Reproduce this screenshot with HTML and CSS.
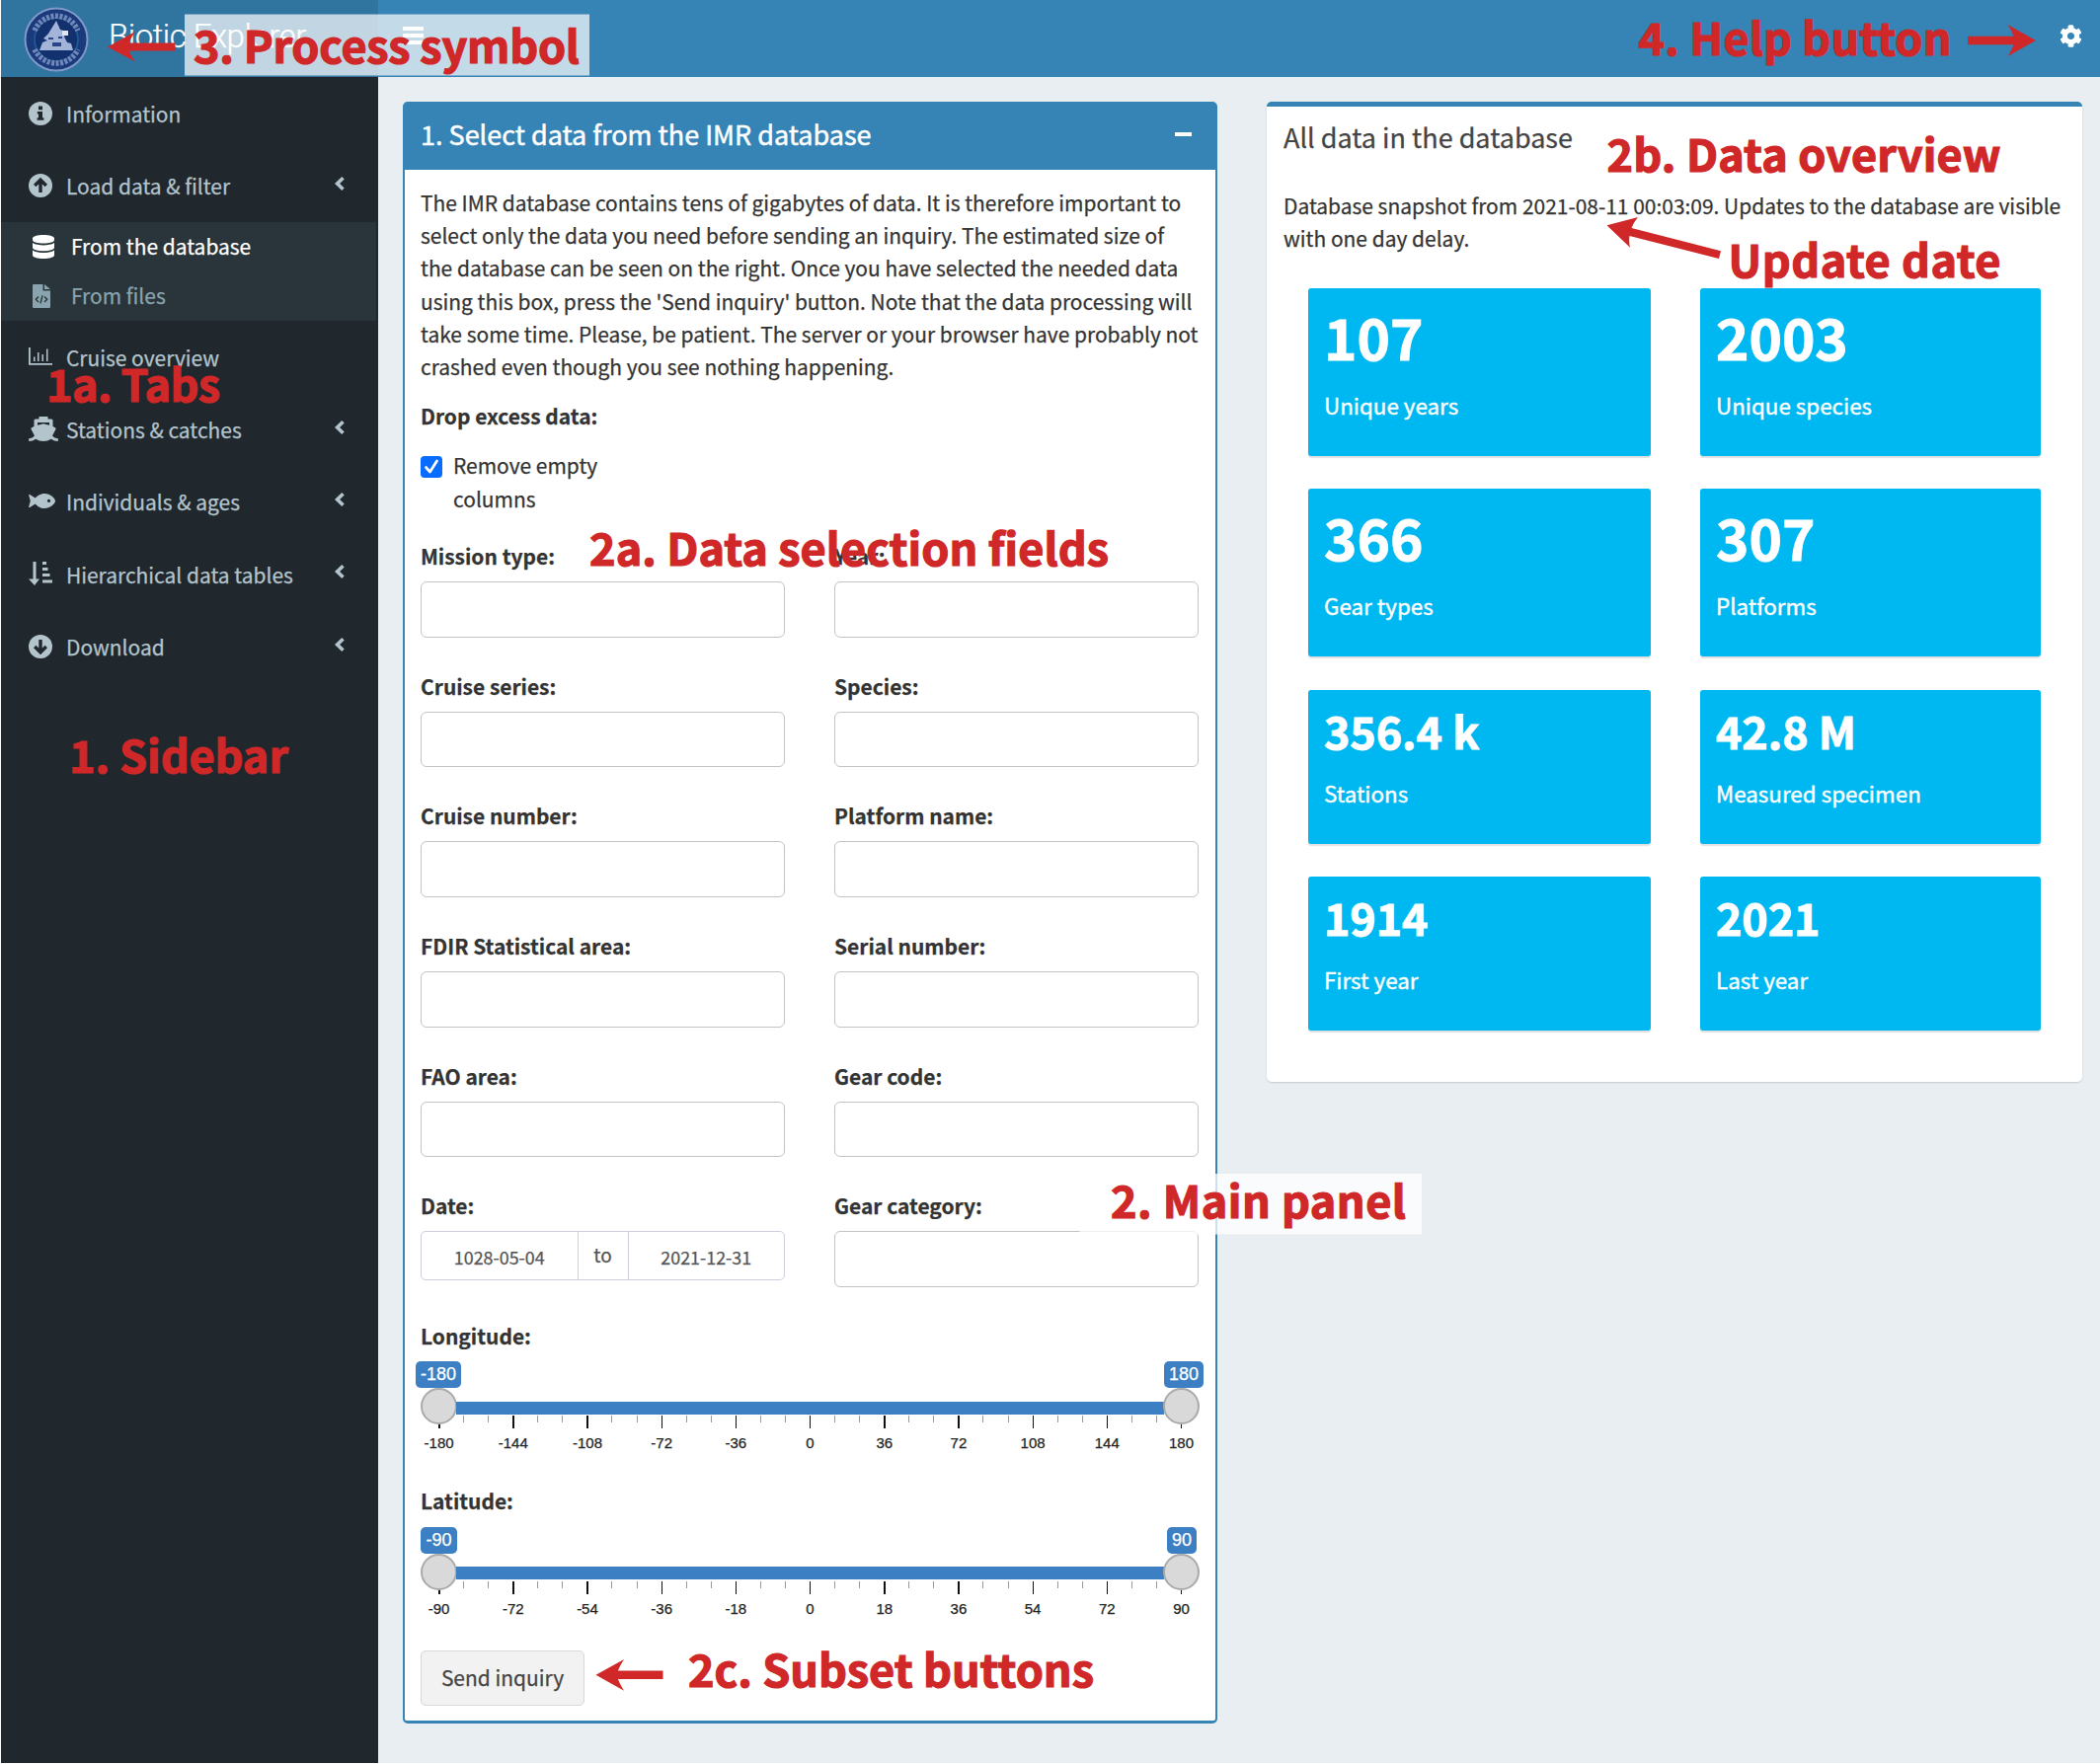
FILE: index.html
```html
<!DOCTYPE html>
<html lang="en">
<head>
<meta charset="utf-8">
<title>Biotic Explorer</title>
<link rel="stylesheet" href="styles.css">
</head>
<body>
<div class="app">
  <header class="topbar">
    <div class="brand">
      <svg class="logo" viewBox="0 0 66 66">
        <circle cx="33" cy="33" r="31.500" fill="#1a3a7c" stroke="#7f99c8" stroke-width="2"/>
        <circle cx="33" cy="33" r="22" fill="#14316f" stroke="#1d5a92" stroke-width="1.800"/>
        <path d="M13.500 25A21 21 0 0 1 52.500 25M13.500 42A21.500 21.500 0 0 0 52.500 42" fill="none" stroke="#7288bb" stroke-width="5" stroke-dasharray="2.600 1.400" transform="translate(33 33) scale(1.120) translate(-33 -33)"/>
        <path d="M33 14L37 23 44 25 41 30 44 36 48 37 50 44H16L19 36 24 34 20 32 25 27z" fill="#a3b4d9"/>
        <path d="M39 24h6v5h-6z" fill="#dfe6f3"/>
        <path d="M29 36h9v4h-9zM25 31h5v2h-5zM35 30h4v2h-4z" fill="#2a4688"/>
      </svg>
      <span class="brand-name">Biotic Explorer</span>
    </div>
    <nav class="navbar">
      <svg class="burger" viewBox="0 0 21 18"><path d="M0 0h21v4H0zM0 7h21v4H0zM0 14h21v4H0z" fill="#fff"/></svg>
      <svg class="gear" viewBox="0 0 512 512"><path fill="#fff" fill-rule="evenodd" d="M487.400 315.700l-42.600-24.600c4.300-23.200 4.300-47 0-70.200l42.600-24.600c4.900-2.800 7.100-8.600 5.500-14-11.100-35.600-30-67.800-54.700-94.600-3.800-4.100-10-5.100-14.800-2.300L380.800 110c-17.900-15.400-38.500-27.300-60.800-35.100V25.800c0-5.600-3.900-10.500-9.400-11.700-36.700-8.200-74.300-7.800-109.200 0-5.500 1.200-9.400 6.100-9.400 11.700V75c-22.200 7.900-42.800 19.800-60.800 35.100L88.700 85.500c-4.900-2.800-11-1.900-14.800 2.300-24.700 26.700-43.600 58.900-54.700 94.600-1.700 5.400.6 11.200 5.500 14L67.300 221c-4.300 23.200-4.300 47 0 70.200l-42.600 24.600c-4.900 2.800-7.100 8.600-5.500 14 11.100 35.600 30 67.800 54.700 94.600 3.800 4.100 10 5.100 14.800 2.300l42.600-24.600c17.900 15.400 38.500 27.300 60.800 35.100v49.200c0 5.600 3.900 10.500 9.400 11.700 36.700 8.200 74.300 7.800 109.200 0 5.500-1.200 9.400-6.100 9.400-11.700v-49.200c22.200-7.900 42.800-19.800 60.800-35.100l42.600 24.600c4.900 2.800 11 1.900 14.800-2.300 24.700-26.700 43.600-58.900 54.700-94.600 1.500-5.500-.7-11.300-5.600-14.100zM256 336c-44.100 0-80-35.900-80-80s35.900-80 80-80 80 35.900 80 80-35.900 80-80 80z"/></svg>
    </nav>
  </header>

  <div class="main">
    <aside class="sidebar">
      <a class="item">
        <svg class="ico" viewBox="0 0 24 24"><circle cx="12" cy="12" r="12"/><path class="cut" d="M10 4.500h4v3.800h-4zM8.800 10h5.200v6.200h1.400v2.500H8.600v-2.500H10v-3.700H8.800z"/></svg>
        <span class="text">Information</span>
      </a>
      <a class="item">
        <svg class="ico" viewBox="0 0 24 24"><circle cx="12" cy="12" r="12"/><path class="cut-line" d="M12 19V6.500M6.200 12L12 6.200 17.800 12"/></svg>
        <span class="text">Load data &amp; filter</span>
        <svg class="chev" viewBox="0 0 10 14"><path d="M8.500 1.300L2.600 7l5.900 5.700"/></svg>
      </a>
      <div class="submenu">
        <a class="sub active">
          <svg class="ico" viewBox="0 0 22 24"><path d="M0 3.500C0 1.500 5 0 11 0s11 1.500 11 3.500v1.800C22 7.200 17 8.600 11 8.600S0 7.200 0 5.300zM0 8c2.500 1.800 7 2.400 11 2.400S19.500 9.800 22 8v4.700c0 2-5 3.500-11 3.500S0 14.700 0 12.700zM0 15.500c2.500 1.800 7 2.500 11 2.500s8.500-.7 11-2.500v5c0 2-5 3.500-11 3.500S0 22.500 0 20.500z"/></svg>
          <span class="text">From the database</span>
        </a>
        <a class="sub">
          <svg class="ico file" viewBox="0 0 18 24"><path d="M0 1.200Q0 0 1.200 0H10.500v6.500H18v16.300q0 1.200-1.200 1.200H1.200Q0 24 0 22.800zM12 0l6 5h-6z"/><path class="cut-thin" d="M6 12.500L3.300 15.300 6 18M12 12.500l2.700 2.800L12 18M10 11.300L8 19.300"/></svg>
          <span class="text">From files</span>
        </a>
      </div>
      <a class="item">
        <svg class="ico chart" viewBox="0 0 24 18"><path d="M0 0h1.800v16H24v1.800H0zM5 9.500h1.500V14H5zM9 5h1.500v9H9zM13.500 7H15v7h-1.500zM18 1.500h1.500V14H18z"/></svg>
        <span class="text">Cruise overview</span>
      </a>
      <a class="item">
        <svg class="ico ship" viewBox="0 0 30 25"><path fill-rule="evenodd" d="M10.500 0h9v2.500H23q1.500 0 1.500 1.500v6l2.500 1.300q1 .6.400 1.600L24 19.500q2 2.500 5.800 2.800V25q-4 0-7-2.300-3.500 2.300-7.800 2.300t-7.800-2.300Q4.200 25 .2 25v-2.700Q4 22 6 19.500l-3.400-6.600q-.6-1 .4-1.600L5.500 10V4Q5.500 2.500 7 2.500h3.500zM9 6v2.800l6-1.600 6 1.600V6z"/></svg>
        <span class="text">Stations &amp; catches</span>
        <svg class="chev" viewBox="0 0 10 14"><path d="M8.500 1.300L2.600 7l5.900 5.700"/></svg>
      </a>
      <a class="item">
        <svg class="ico fish" viewBox="0 0 27 15"><path fill-rule="evenodd" d="M16 0c6 0 11 5 11 7.500S22 15 16 15c-4 0-7.500-2.500-9.300-4.600L1.200 14Q0 14.500.2 13.200L1.800 7.500.2 1.800Q0 .5 1.200 1l5.500 3.600C8.500 2.500 12 0 16 0zM20.500 5.800a1.600 1.600 0 1 0 .01 0z"/></svg>
        <span class="text">Individuals &amp; ages</span>
        <svg class="chev" viewBox="0 0 10 14"><path d="M8.500 1.300L2.600 7l5.900 5.700"/></svg>
      </a>
      <a class="item">
        <svg class="ico sort" viewBox="0 0 24 24"><path d="M4.500 0h3v17.500H11L6 24 0 17.500h4.500zM14 0h4v3h-4zM14 6h5.500v3H14zM14 12h7.500v3H14zM14 18.500h10v3H14z"/></svg>
        <span class="text">Hierarchical data tables</span>
        <svg class="chev" viewBox="0 0 10 14"><path d="M8.500 1.300L2.600 7l5.900 5.700"/></svg>
      </a>
      <a class="item">
        <svg class="ico" viewBox="0 0 24 24"><circle cx="12" cy="12" r="12"/><path class="cut-line" d="M12 5v12.500M6.200 12l5.800 5.800L17.800 12"/></svg>
        <span class="text">Download</span>
        <svg class="chev" viewBox="0 0 10 14"><path d="M8.500 1.300L2.600 7l5.900 5.700"/></svg>
      </a>
    </aside>

    <main class="content">
      <section class="box box-select">
        <header class="box-header">
          <h3 class="title">1. Select data from the IMR database</h3>
          <span class="collapse"></span>
        </header>
        <div class="box-body">
          <p class="para">The IMR database contains tens of gigabytes of data. It is therefore important to<br>select only the data you need before sending an inquiry. The estimated size of<br>the database can be seen on the right. Once you have selected the needed data<br>using this box, press the 'Send inquiry' button. Note that the data processing will<br>take some time. Please, be patient. The server or your browser have probably not<br>crashed even though you see nothing happening.</p>
          <div class="label drop">Drop excess data:</div>
          <div class="check">
            <svg class="tick" viewBox="0 0 22 22"><rect width="22" height="22" rx="4" fill="#0a6cff"/><path d="M5.500 11.500l4 4.500 7-11" fill="none" stroke="#fff" stroke-width="2.700" stroke-linecap="round" stroke-linejoin="round"/></svg>
            <span>Remove empty<br>columns</span>
          </div>
          <div class="fields">
            <div class="field"><div class="label">Mission type:</div><div class="input"></div></div>
            <div class="field"><div class="label">Year:</div><div class="input"></div></div>
            <div class="field"><div class="label">Cruise series:</div><div class="input"></div></div>
            <div class="field"><div class="label">Species:</div><div class="input"></div></div>
            <div class="field"><div class="label">Cruise number:</div><div class="input"></div></div>
            <div class="field"><div class="label">Platform name:</div><div class="input"></div></div>
            <div class="field"><div class="label">FDIR Statistical area:</div><div class="input"></div></div>
            <div class="field"><div class="label">Serial number:</div><div class="input"></div></div>
            <div class="field"><div class="label">FAO area:</div><div class="input"></div></div>
            <div class="field"><div class="label">Gear code:</div><div class="input"></div></div>
            <div class="field"><div class="label">Date:</div><div class="dates"><span class="date">1028-05-04</span><span class="to">to</span><span class="date">2021-12-31</span></div></div>
            <div class="field"><div class="label">Gear category:</div><div class="input"></div></div>
          </div>
          <div class="slider">
            <div class="label">Longitude:</div>
            <div class="badges"><span class="badge">-180</span><span class="badge">180</span></div>
            <div class="track"><i class="knob"></i><i class="bar"></i><i class="knob"></i></div>
            <div class="ticks"></div>
            <div class="scale"><span>-180</span><span>-144</span><span>-108</span><span>-72</span><span>-36</span><span>0</span><span>36</span><span>72</span><span>108</span><span>144</span><span>180</span></div>
          </div>
          <div class="slider">
            <div class="label">Latitude:</div>
            <div class="badges"><span class="badge">-90</span><span class="badge">90</span></div>
            <div class="track"><i class="knob"></i><i class="bar"></i><i class="knob"></i></div>
            <div class="ticks"></div>
            <div class="scale"><span>-90</span><span>-72</span><span>-54</span><span>-36</span><span>-18</span><span>0</span><span>18</span><span>36</span><span>54</span><span>72</span><span>90</span></div>
          </div>
          <button class="send">Send inquiry</button>
        </div>
      </section>

      <section class="box box-overview">
        <h3 class="title">All data in the database</h3>
        <p class="para">Database snapshot from 2021-08-11 00:03:09. Updates to the database are visible<br>with one day delay.</p>
        <div class="cards">
          <div class="card big"><b>107</b><span>Unique years</span></div>
          <div class="card big"><b>2003</b><span>Unique species</span></div>
          <div class="card big"><b>366</b><span>Gear types</span></div>
          <div class="card big"><b>307</b><span>Platforms</span></div>
          <div class="card"><b>356.4 k</b><span>Stations</span></div>
          <div class="card"><b>42.8 M</b><span>Measured specimen</span></div>
          <div class="card"><b>1914</b><span>First year</span></div>
          <div class="card"><b>2021</b><span>Last year</span></div>
        </div>
      </section>
    </main>
  </div>

  <svg class="notes" viewBox="0 0 2127 1787">
    <rect x="187" y="14.500" width="410" height="62" fill="#fff" fill-opacity=".7"/>
    <rect x="1093.500" y="1189" width="346.500" height="61.500" fill="#fff" fill-opacity=".75"/>
    <g class="arrows">
      <path d="M109 47.500L137 32Q132 39 131 43.500H177.500V51.500H131Q132 56 137 62.500z"/>
      <path d="M2062 41L2033.500 25Q2038 32 2039.500 36.700H1993V45.300H2039.500Q2038 50 2033.500 57z"/>
      <path d="M603.500 1696.700L632 1681Q627.500 1688 626 1692.400H671.500V1701H626Q627.500 1705.500 632 1712.700z"/>
      <path d="M1627.500 228.300L1659 220Q1654.500 225.500 1652.500 231L1743 254.300 1741 262 1650.500 239Q1649.500 244 1651 250.700z"/>
    </g>
    <g class="captions">
      <text x="196" y="63.500" textLength="391">3. Process symbol</text>
      <text x="1659.500" y="55.700" textLength="317">4. Help button</text>
      <text x="47" y="407" textLength="176">1a. Tabs</text>
      <text x="70" y="782.700" textLength="222">1. Sidebar</text>
      <text x="597" y="573" textLength="526">2a. Data selection fields</text>
      <text x="1627.500" y="173.700" textLength="399">2b. Data overview</text>
      <text x="1750.500" y="280.700" textLength="276">Update date</text>
      <text x="1125" y="1233.700" textLength="299">2. Main panel</text>
      <text x="697" y="1708.700" textLength="411">2c. Subset buttons</text>
    </g>
  </svg>
</div>
</body>
</html>
```
FILE: styles.css
```css
* { box-sizing: border-box; }
body { margin: 0; background: #fff; }
h3, p { margin: 0; font-weight: 400; }

.app {
  position: relative;
  width: 2127px;
  height: 1787px;
  padding: 0 0 1px 1px;
  display: flex;
  flex-direction: column;
  overflow: hidden;
  font-family: "Noto Sans CJK SC", "Open Sans", sans-serif;
  font-size: 20.960px;
  line-height: 33.33px;
  color: #333;
  -webkit-text-stroke: .25px currentColor;
}

/* top bar */
.topbar { display: flex; height: 78px; flex: none; }
.brand {
  width: 382px;
  background: #3074a0;
  display: flex;
  align-items: center;
  padding: 0 0 0 23px;
}
.logo { width: 66px; height: 66px; margin-top: 2px; }
.brand-name {
  margin-left: 20px;
  margin-top: -5px;
  font-family: Roboto, "Liberation Sans", sans-serif;
  font-weight: 300;
  font-size: 33px;
  letter-spacing: -0.5px;
  color: #fff;
  white-space: nowrap;
}
.navbar {
  flex: 1;
  background: #3683b5;
  display: flex;
  justify-content: space-between;
  padding: 25px 18px 0 25px;
}
.burger { width: 21px; height: 18px; margin-top: 2px; }
.gear { width: 23px; height: 23px; }

/* sidebar */
.main { flex: 1; display: flex; min-height: 0; }
.sidebar { width: 382px; background: #20282e; color: #b4c4cc; }
.item {
  height: 73.33px;
  display: flex;
  align-items: center;
  padding: 0 34px 0 28px;
}
.item .text { width: 272px; margin-top: 2px; white-space: nowrap; }
.ico { flex: none; width: 24px; height: 24px; margin-right: 14px; fill: #b4c4cc; }
.ico.ship { width: 30px; height: 25px; margin-right: 8px; }
.ico.fish { width: 27px; height: 15px; margin-right: 11px; }
.ico.chart { height: 18px; }
.cut { fill: #20282e; }
.cut-line { fill: none; stroke: #20282e; stroke-width: 3.4; }
.cut-thin { fill: none; stroke: #29353a; stroke-width: 1.4; }
.chev { width: 10px; height: 14px; margin-top: -4px; }
.chev path { fill: none; stroke: #b4c4cc; stroke-width: 3.6; }
.submenu {
  width: 380px;
  height: 100px;
  padding-left: 32px;
  background: #29353a;
}
.sub { display: flex; align-items: center; height: 50px; color: #8aa4af; }
.sub .text { margin-top: 1px; }
.sub .ico { width: 22px; margin-right: 17px; fill: #8aa4af; }
.sub .ico.file { width: 18px; margin-right: 21px; }
.sub.active { color: #fff; }
.sub.active .ico { fill: #fff; }

/* content */
.content {
  flex: 1;
  background: #e9eef2;
  display: flex;
  align-items: flex-start;
  gap: 50px;
  padding: 25px 0 0 25px;
}
.box { width: 825px; background: #fff; border-radius: 5px; flex: none; }
.title { font-size: 27px; line-height: 33px; }
.para { white-space: nowrap; }

.box-select { height: 1643px; border: 2px solid #3683b5; border-bottom-width: 3px; }
.box-header {
  height: 67px;
  background: #3683b5;
  color: #fff;
  display: flex;
  justify-content: space-between;
  padding: 14px 24px 0 16px;
  -webkit-text-stroke-width: .5px;
}
.collapse { width: 17px; height: 4px; margin-top: 15px; background: #fff; }
.box-body { padding: 16.800px 16px 0; }
.label { font-weight: 700; line-height: 33.33px; white-space: nowrap; }
.drop { margin-top: 16.700px; }
.check { display: flex; margin: 16.700px 0 25px; }
.tick { width: 22px; height: 22px; margin: 7px 11px 0 0; }

.fields { display: grid; grid-template-columns: 369px 369px; column-gap: 50px; }
.field { height: 131.670px; }
.input {
  height: 56.500px;
  margin-top: 8.700px;
  border: 1.500px solid #c3c3c3;
  border-radius: 6px;
}
.dates {
  height: 50px;
  margin-top: 8.700px;
  display: flex;
  border: 1.500px solid #ccd0de;
  border-radius: 5px;
  color: #555;
  line-height: 46px;
  text-align: center;
}
.date { flex: 1; font-size: 17.900px; line-height: 50px; }
.to { width: 52px; border: solid #ccd0de; border-width: 0 1.500px; font-size: 19px; }

.slider { height: 167.300px; }
.badges {
  display: flex;
  justify-content: space-between;
  margin: 9px -4px 0 -5px;
  font: 18px/27px "Liberation Sans", Arial, sans-serif;
}
.badge {
  min-width: 37px;
  padding: 0 5px;
  background: #3c80c3;
  border-radius: 5px;
  color: #fff;
  text-align: center;
}
.slider + .slider .badges { margin: 9px 0 0; }
.slider + .slider .badge:last-child { min-width: 30px; margin-right: 3px; }
.track { position: relative; z-index: 1; display: flex; align-items: center; height: 37px; }
.knob {
  width: 37px;
  height: 37px;
  flex: none;
  border: 2px solid #aaa;
  border-radius: 50%;
  background: #d9d9d9;
}
.bar { flex: 1; height: 13px; margin: 3px -1px 0; background: #3c80c3; }
.ticks {
  width: 754px;
  height: 13px;
  margin: -9px 0 0 18px;
  background:
    repeating-linear-gradient(90deg, #111 0 1.500px, transparent 1.500px 75.200px) 0 0 / 100% 13px no-repeat,
    repeating-linear-gradient(90deg, #999 0 1px, transparent 1px 25.067px) 0 0 / 100% 7px no-repeat;
}
.scale {
  display: flex;
  justify-content: space-between;
  margin: 5px -12px 0 -19px;
  font: 15px/20px "Liberation Sans", Arial, sans-serif;
  color: #222;
}
.scale span { width: 75.200px; flex: none; text-align: center; }
.send {
  width: 166px;
  height: 56px;
  padding: 0;
  border: 1.500px solid #d8d8d8;
  border-radius: 5px;
  background: #f2f2f2;
  color: #444;
  font: inherit;
}

.box-overview {
  width: 826px;
  height: 993px;
  padding: 13px 17px 0;
  border-top: 5px solid #3683b5;
  box-shadow: 0 1px 2px rgba(0, 0, 0, .15);
}
.box-overview .title { color: #444; line-height: 36px; }
.box-overview .para { margin-top: 35px; }
.cards {
  display: grid;
  grid-template-columns: 347px 345px;
  column-gap: 50px;
  row-gap: 33.500px;
  padding: 33px 0 0 25px;
}
.card {
  height: 156px;
  padding: 16px 16px 0;
  border-radius: 3px;
  background: #00b8f1;
  box-shadow: 0 1.500px 1px rgba(0, 0, 0, .12);
  color: #fff;
  display: flex;
  flex-direction: column;
}
.card b { font-size: 44.700px; line-height: 50px; -webkit-text-stroke-width: 1px; }
.card span { font-size: 22.400px; line-height: 34px; margin-top: 21px; -webkit-text-stroke-width: .4px; }
.card.big { height: 170px; }
.card.big b { font-size: 56.700px; line-height: 64px; }

/* annotation layer */
.notes { position: absolute; left: 0; top: 0; width: 2127px; height: 1787px; }
.arrows, .captions { fill: #d02728; }
.captions { font-size: 45px; font-weight: 700; -webkit-text-stroke: 0; stroke: #d02728; stroke-width: 1.2px; }
```
